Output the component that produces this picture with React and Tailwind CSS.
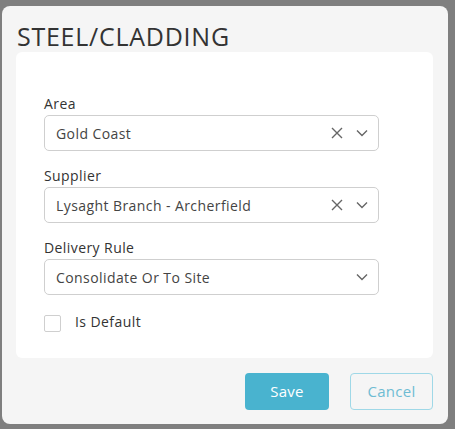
import React from 'react';

const X = () => (
    <svg width="14" height="14" viewBox="0 0 14 14" className="text-[#666]">
        <path d="M2 2 L12 12 M12 2 L2 12" stroke="currentColor" strokeWidth="1.4" fill="none" />
    </svg>
);

const Chevron = () => (
    <svg width="14" height="14" viewBox="0 0 14 14" className="text-[#666]">
        <path d="M2 4.5 L7 9.5 L12 4.5" stroke="currentColor" strokeWidth="1.4" fill="none" />
    </svg>
);

const SelectBox = ({ value, clearable }) => (
    <div className="h-9 w-[335px] border border-[#cfcfcf] rounded-[5px] bg-white flex items-center pl-[11px] pr-[9px]">
        <span className="flex-1 text-[14px] tracking-[0.03em] text-[#444] truncate">{value}</span>
        {clearable && <span className="mr-[11px] flex"><X /></span>}
        <span className="flex"><Chevron /></span>
    </div>
);

const Field = ({ label, value, clearable }) => (
    <div className="flex flex-col">
        <label className="text-[14px] font-medium tracking-[0.03em] text-[#333] leading-5 mb-[1px]">{label}</label>
        <SelectBox value={value} clearable={clearable} />
    </div>
);

const App = () => {
    return (
        <div className="w-[455px] h-[429px] bg-[#7f7f7f] pt-[6px] pl-[2px] font-['Open_Sans',sans-serif]">
            <div className="w-[446px] h-[418px] bg-[#f5f5f5] rounded-[8px] pl-[14px] pr-[15px] flex flex-col">
                <h2 className="text-[25px] tracking-[0.03em] text-[#333] leading-[28px] pt-[16px] pb-[2px] pl-[1px]">STEEL/CLADDING</h2>
                <div className="bg-white rounded-[6px] h-[306px] pt-[42px] px-[28px] flex flex-col gap-[15px]">
                    <Field label="Area" value="Gold Coast" clearable />
                    <Field label="Supplier" value="Lysaght Branch - Archerfield" clearable />
                    <Field label="Delivery Rule" value="Consolidate Or To Site" />
                    <div className="flex items-center mt-[1px]">
                        <span className="w-[17px] h-[17px] border border-[#cfcfcf] rounded-[2px] bg-white" />
                        <span className="ml-[14px] mb-[4px] text-[14px] font-medium tracking-[0.03em] text-[#333]">Is Default</span>
                    </div>
                </div>
                <div className="flex justify-end gap-[21px] mt-[15px]">
                    <button className="w-[84px] h-[37px] rounded-[4px] bg-[#49b3cf] text-white text-[15px] font-medium tracking-[0.02em]">Save</button>
                    <button className="w-[83px] h-[37px] rounded-[4px] border border-[#9fd8e7] text-[#6fbcd3] text-[15px] tracking-[0.02em]">Cancel</button>
                </div>
            </div>
        </div>
    );
};

export default App;
